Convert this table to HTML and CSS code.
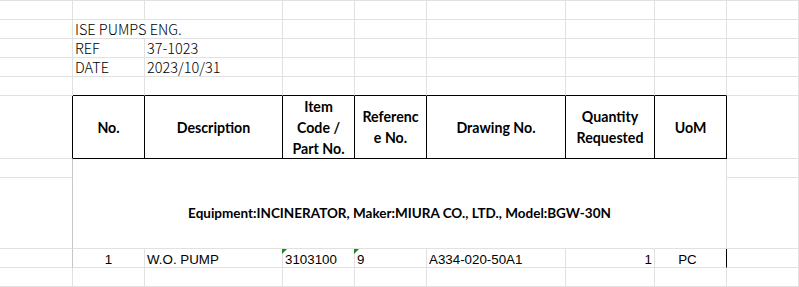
FILE: index.html
```html
<!DOCTYPE html>
<html>
<head>
<meta charset="utf-8">
<link rel="stylesheet" href="styles.css">
</head>
<body>
<div class="sheet">
  <!-- row 1 -->
  <div class="c"></div><div class="c"></div><div class="c"></div><div class="c"></div><div class="c"></div><div class="c"></div><div class="c"></div><div class="c"></div><div class="c"></div>
  <!-- row 2 -->
  <div class="c"></div><div class="c dx span2">ISE PUMPS ENG.</div><div class="c"></div><div class="c"></div><div class="c"></div><div class="c"></div><div class="c"></div><div class="c"></div>
  <!-- row 3 -->
  <div class="c"></div><div class="c dx">REF</div><div class="c dx">37-1023</div><div class="c"></div><div class="c"></div><div class="c"></div><div class="c"></div><div class="c"></div><div class="c"></div>
  <!-- row 4 -->
  <div class="c"></div><div class="c dx">DATE</div><div class="c dx">2023/10/31</div><div class="c"></div><div class="c"></div><div class="c"></div><div class="c"></div><div class="c"></div><div class="c"></div>
  <!-- row 5 -->
  <div class="c"></div><div class="c bb"></div><div class="c bb"></div><div class="c bb"></div><div class="c bb"></div><div class="c bb"></div><div class="c bb"></div><div class="c bb"></div><div class="c"></div>
  <!-- header row -->
  <div class="c rb"></div>
  <div class="c rb bb hd">No.</div>
  <div class="c rb bb hd">Description</div>
  <div class="c rb bb hd">Item<br>Code /<br>Part No.</div>
  <div class="c rb bb hd">Referenc<br>e No.</div>
  <div class="c rb bb hd">Drawing No.</div>
  <div class="c rb bb hd">Quantity<br>Requested</div>
  <div class="c rb bb hd">UoM</div>
  <div class="c"></div>
  <!-- rows 7-8 -->
  <div class="c rd"></div>
  <div class="c equip hd">Equipment:INCINERATOR, Maker:MIURA CO., LTD., Model:BGW-30N</div>
  <div class="c"></div>
  <div class="c rd"></div>
  <div class="c"></div>
  <!-- row 9 -->
  <div class="c rd"></div>
  <div class="c ar center">1</div>
  <div class="c ar">W.O. PUMP</div>
  <div class="c ar flag">3103100</div>
  <div class="c ar flag">9</div>
  <div class="c ar">A334-020-50A1</div>
  <div class="c ar right">1</div>
  <div class="c ar center rb uom">PC</div>
  <div class="c"></div>
  <!-- row 10 -->
  <div class="c"></div><div class="c"></div><div class="c"></div><div class="c"></div><div class="c"></div><div class="c"></div><div class="c"></div><div class="c"></div><div class="c"></div>
</div>
</body>
</html>
```

FILE: styles.css
```css
html, body {
  margin: 0;
  padding: 0;
  background: #ffffff;
}

.sheet {
  display: grid;
  grid-template-columns: 73px 72px 138px 72px 72px 139px 89px 72px 72px;
  grid-template-rows: 19px 19px 19px 19px 19px 63px 19px 71px 19px 19px;
  border-top: 1px solid #e1e1e1;
  width: 799px;
  color: #000;
}

.c {
  box-sizing: border-box;
  border-right: 1px solid #e1e1e1;
  border-bottom: 1px solid #e1e1e1;
  position: relative;
  white-space: nowrap;
  overflow: visible;
}

.bb { border-bottom-color: #000; }
.rb { border-right-color: #000; }
.rd { border-right-color: #c6c6c6; }

.span2 { grid-column: span 2; }

.dx {
  font-family: "Noto Sans CJK SC", "Noto Sans", sans-serif;
  font-weight: 300;
  font-size: 14.5px;
  line-height: 18px;
  padding-left: 2px;
  display: flex;
  align-items: flex-end;
}

.hd {
  font-family: Lato, "Liberation Sans", sans-serif;
  font-weight: 700;
  font-size: 14.2px;
  line-height: 21px;
  display: flex;
  align-items: center;
  justify-content: center;
  text-align: center;
}

.equip {
  grid-column: 2 / 9;
  grid-row: 7 / 9;
  padding-top: 19px;
  font-size: 13.5px;
}

.ar {
  font-family: "Liberation Sans", Arial, sans-serif;
  font-size: 13.33px;
  line-height: 18px;
  padding: 2px 2px 0 2px;
}

.center { text-align: center; }
.right { text-align: right; }
.uom { padding-right: 8px; }

.flag::before {
  content: "";
  position: absolute;
  top: 0;
  left: -1px;
  width: 0;
  height: 0;
  border-top: 5px solid #1c8a1c;
  border-right: 5px solid transparent;
}
```
